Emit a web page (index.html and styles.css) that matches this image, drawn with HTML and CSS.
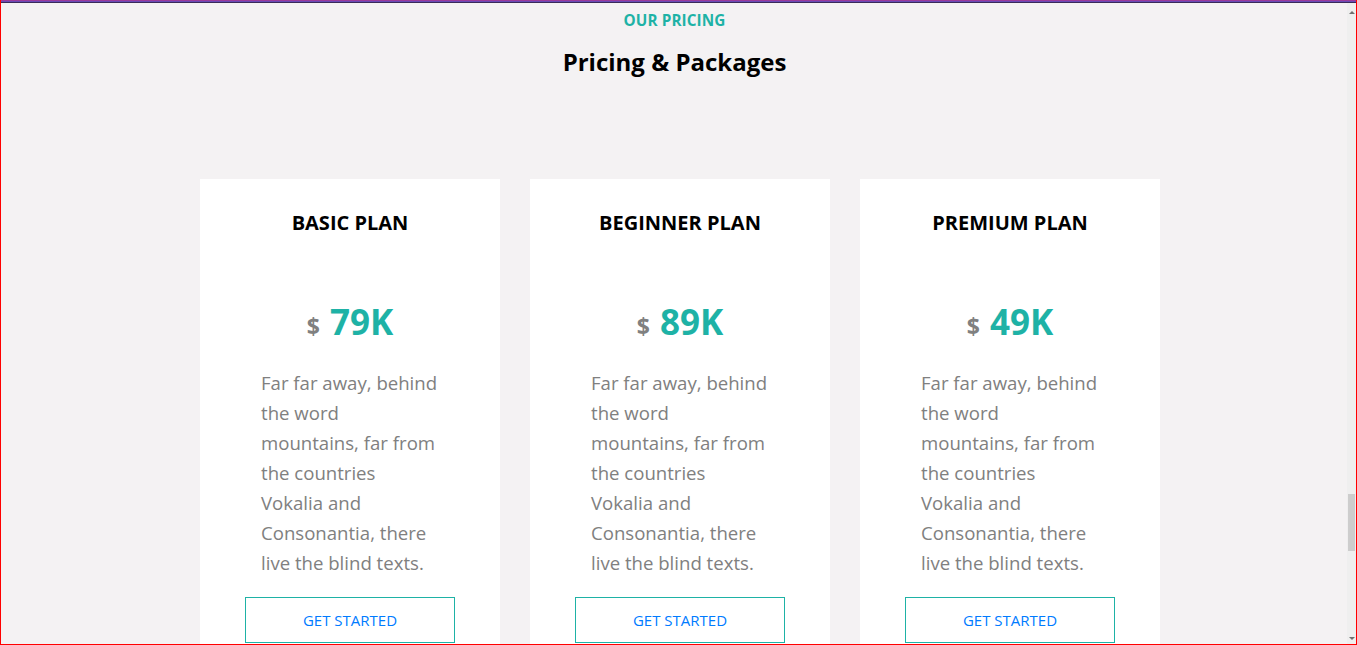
FILE: index.html
```html
<!DOCTYPE html>
<html lang="en">
<head>
<meta charset="utf-8">
<title>Pricing &amp; Packages</title>
<link rel="stylesheet" href="styles.css">
</head>
<body>
<div class="frame">
  <div class="topbar"></div>
  <section class="pricing">
    <header class="heading">
      <span class="subheading">OUR PRICING</span>
      <h2 class="title">Pricing &amp; Packages</h2>
    </header>
    <div class="cards">
      <article class="card">
        <h3 class="plan">BASIC PLAN</h3>
        <div class="price"><span class="currency">$</span><span class="amount">79K</span></div>
        <p class="desc">Far far away, behind the word mountains, far from the countries Vokalia and Consonantia, there live the blind texts.</p>
        <a class="btn" href="#">GET STARTED</a>
      </article>
      <article class="card">
        <h3 class="plan">BEGINNER PLAN</h3>
        <div class="price"><span class="currency">$</span><span class="amount">89K</span></div>
        <p class="desc">Far far away, behind the word mountains, far from the countries Vokalia and Consonantia, there live the blind texts.</p>
        <a class="btn" href="#">GET STARTED</a>
      </article>
      <article class="card">
        <h3 class="plan">PREMIUM PLAN</h3>
        <div class="price"><span class="currency">$</span><span class="amount">49K</span></div>
        <p class="desc">Far far away, behind the word mountains, far from the countries Vokalia and Consonantia, there live the blind texts.</p>
        <a class="btn" href="#">GET STARTED</a>
      </article>
    </div>
  </section>
  <div class="scrollbar">
    <span class="arrow arrow-up"></span>
    <span class="thumb"></span>
    <span class="arrow arrow-down"></span>
  </div>
</div>
</body>
</html>
```
FILE: styles.css
```css
* { box-sizing: border-box; }
html, body { margin: 0; padding: 0; }
body {
  font-family: "Open Sans", "Noto Sans", "Liberation Sans", sans-serif;
  background: #f4f2f3;
}
.frame {
  position: relative;
  width: 1357px;
  height: 645px;
  border: 1px solid #ff0000;
  border-top: none;
  overflow: hidden;
  background: #f4f2f3;
}
.topbar {
  height: 3px;
  border-top: 1px solid #9a3a9a;
  background: #6a4ab6;
  border-bottom: 1px solid #3a2a5a;
}
.pricing {
  padding-top: 8px;
}
.heading {
  display: flex;
  flex-direction: column;
  align-items: center;
  padding-right: 8px;
}
.subheading {
  color: #1eb2a6;
  font-weight: 700;
  font-size: 15.3px;
  line-height: 19px;
  letter-spacing: 0.1px;
}
.title {
  margin: 15px 0 0;
  font-size: 24px;
  line-height: 34px;
  font-weight: 700;
  color: #000;
}
.cards {
  display: flex;
  justify-content: center;
  gap: 30px;
  margin-top: 100px;
  padding-left: 3px;
}
.card {
  width: 300px;
  height: 480px;
  background: #fff;
  display: flex;
  flex-direction: column;
  align-items: center;
  padding-top: 30px;
}
.plan {
  margin: 0;
  font-size: 20px;
  line-height: 28px;
  font-weight: 700;
  color: #000;
}
.price {
  margin-top: 60px;
  line-height: 50px;
  color: #1eb2a6;
  display: flex;
  align-items: baseline;
  gap: 10px;
}
.currency {
  color: #808080;
  font-size: 23px;
  font-weight: 700;
}
.amount {
  font-size: 35px;
  font-weight: 700;
}
.desc {
  margin: 17px 0 0;
  width: 178px;
  font-size: 18.6px;
  line-height: 30px;
  color: #808080;
}
.btn {
  margin-top: 19px;
  width: 210px;
  height: 46px;
  border: 1px solid #1eb2a6;
  display: flex;
  align-items: center;
  justify-content: center;
  color: #007bff;
  font-size: 15px;
  text-decoration: none;
}
.scrollbar {
  position: absolute;
  top: 3px;
  right: 0;
  width: 9px;
  bottom: 0;
  background: #efefef;
}
.thumb {
  position: absolute;
  left: 1px;
  right: 1px;
  top: 491px;
  height: 57px;
  background: #cdcdcd;
}
.arrow {
  position: absolute;
  left: 2px;
  width: 0;
  height: 0;
  border-left: 3px solid transparent;
  border-right: 3px solid transparent;
}
.arrow-up { top: 8px; border-bottom: 3px solid #707070; }
.arrow-down { bottom: 4px; border-top: 3px solid #707070; }
```
